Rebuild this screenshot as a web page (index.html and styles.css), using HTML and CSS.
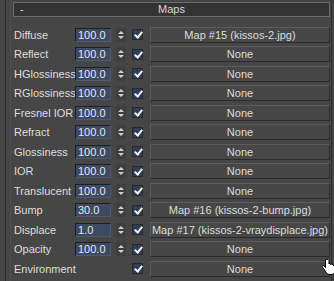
FILE: index.html
```html
<!doctype html>
<html lang="en">
  <head>
    <meta charset="UTF-8" />
    <title>Maps</title>
    <link rel="stylesheet" href="styles.css">
  </head>
  <body>
    <div class="frame">
      <div class="panel">
        <div class="rollout-head">
          <span class="toggle">-</span>
          <span class="rollout-title">Maps</span>
        </div>

        <div class="map-list">
          <div class="map-row">
            <span class="map-label">Diffuse</span>
            <span class="amount">100.0</span>
            <span class="spinner"><i class="up"></i><i class="down"></i></span>
            <span class="check"></span>
            <button class="map-btn">Map #15 (kissos-2.jpg)</button>
          </div>
          <div class="map-row">
            <span class="map-label">Reflect</span>
            <span class="amount">100.0</span>
            <span class="spinner"><i class="up"></i><i class="down"></i></span>
            <span class="check"></span>
            <button class="map-btn">None</button>
          </div>
          <div class="map-row">
            <span class="map-label">HGlossiness</span>
            <span class="amount">100.0</span>
            <span class="spinner"><i class="up"></i><i class="down"></i></span>
            <span class="check"></span>
            <button class="map-btn">None</button>
          </div>
          <div class="map-row">
            <span class="map-label">RGlossiness</span>
            <span class="amount">100.0</span>
            <span class="spinner"><i class="up"></i><i class="down"></i></span>
            <span class="check"></span>
            <button class="map-btn">None</button>
          </div>
          <div class="map-row">
            <span class="map-label">Fresnel IOR</span>
            <span class="amount">100.0</span>
            <span class="spinner"><i class="up"></i><i class="down"></i></span>
            <span class="check"></span>
            <button class="map-btn">None</button>
          </div>
          <div class="map-row">
            <span class="map-label">Refract</span>
            <span class="amount">100.0</span>
            <span class="spinner"><i class="up"></i><i class="down"></i></span>
            <span class="check"></span>
            <button class="map-btn">None</button>
          </div>
          <div class="map-row">
            <span class="map-label">Glossiness</span>
            <span class="amount">100.0</span>
            <span class="spinner"><i class="up"></i><i class="down"></i></span>
            <span class="check"></span>
            <button class="map-btn">None</button>
          </div>
          <div class="map-row">
            <span class="map-label">IOR</span>
            <span class="amount">100.0</span>
            <span class="spinner"><i class="up"></i><i class="down"></i></span>
            <span class="check"></span>
            <button class="map-btn">None</button>
          </div>
          <div class="map-row">
            <span class="map-label">Translucent</span>
            <span class="amount">100.0</span>
            <span class="spinner"><i class="up"></i><i class="down"></i></span>
            <span class="check"></span>
            <button class="map-btn">None</button>
          </div>
          <div class="map-row">
            <span class="map-label">Bump</span>
            <span class="amount">30.0</span>
            <span class="spinner"><i class="up"></i><i class="down"></i></span>
            <span class="check"></span>
            <button class="map-btn">Map #16 (kissos-2-bump.jpg)</button>
          </div>
          <div class="map-row">
            <span class="map-label">Displace</span>
            <span class="amount">1.0</span>
            <span class="spinner"><i class="up"></i><i class="down"></i></span>
            <span class="check"></span>
            <button class="map-btn">Map #17 (kissos-2-vraydisplace.jpg)</button>
          </div>
          <div class="map-row">
            <span class="map-label">Opacity</span>
            <span class="amount">100.0</span>
            <span class="spinner"><i class="up"></i><i class="down"></i></span>
            <span class="check"></span>
            <button class="map-btn">None</button>
          </div>
          <div class="map-row">
            <span class="map-label wide">Environment</span>
            <span class="check"></span>
            <button class="map-btn">None</button>
          </div>
        </div>
      </div>
    </div>

    <svg class="cursor" width="14" height="18" viewBox="0 0 14 18">
      <path d="M4.5 1.5 v8 l-1.5 -1.5 c-1 -1 -2.5 0 -1.5 1.2 l3.5 5 c1 1.3 2 2.3 4 2.3 h1.5 c2 0 3.5 -1.5 3.5 -3.5 v-5 c0 -1 -1.5 -1 -1.5 0 v-1 c0 -1 -1.5 -1 -1.5 0 v-0.5 c0 -1 -1.5 -1 -1.5 0 v-0.5 c0 -1 -1.5 -1 -1.5 0 v-4.5 c0 -1.2 -1.5 -1.2 -1.5 0 z"
        fill="#fff" stroke="#000" stroke-width="1" />
    </svg>
  </body>
</html>
```

FILE: styles.css
```css
body {
  margin: 0;
  background: #454545;
  font-family: "Liberation Sans", Arial, sans-serif;
  font-size: 11px;
  color: #dcdcdc;
  height: 281px;
  overflow: hidden;
}
.frame {
  margin-left: 5px;
  height: 281px;
  border-left: 1px solid #2c2c2c;
}
.panel {
  margin-left: 4px;
  height: 281px;
  border-left: 1px solid #505050;
  border-right: 1px solid #2c2c2c;
  width: 322px;
  padding: 2px 0 0 2px;
  box-sizing: border-box;
  background: #464646;
}
.rollout-head {
  position: relative;
  height: 15px;
  width: 317px;
  box-sizing: border-box;
  border: 1px solid #6a6a6a;
  background: #333333;
  line-height: 13px;
  text-align: center;
  color: #d8d8d8;
}
.toggle {
  position: absolute;
  left: 6px;
  top: 0;
}
.map-list {
  display: grid;
  grid-auto-rows: 19.5px;
  margin-top: 8px;
}
.map-row {
  display: flex;
  align-items: center;
}
.map-label {
  width: 62px;
  padding-left: 1px;
  box-sizing: border-box;
  white-space: nowrap;
  color: #dedede;
}
.map-label.wide {
  width: 113px;
}
.amount {
  width: 36px;
  height: 14px;
  box-sizing: border-box;
  background: #3c4b63;
  border-top: 1px solid #1e1e1e;
  border-left: 1px solid #1e1e1e;
  border-right: 1px solid #505a6a;
  border-bottom: 1px solid #505a6a;
  color: #e4e8ee;
  line-height: 12px;
  padding-left: 2px;
}
.spinner {
  width: 10px;
  height: 14px;
  margin-left: 5px;
  display: flex;
  flex-direction: column;
  align-items: center;
  justify-content: center;
  gap: 2px;
  background: #3e3e3e;
}
.spinner i {
  width: 0;
  height: 0;
  border-left: 3px solid transparent;
  border-right: 3px solid transparent;
}
.spinner .up {
  border-bottom: 3px solid #cfcfcf;
}
.spinner .down {
  border-top: 3px solid #cfcfcf;
}
.check {
  width: 11px;
  height: 11px;
  margin-left: 6px;
  box-sizing: border-box;
  background: #2f3d55;
  border: 1px solid #24282f;
  position: relative;
}
.check::after {
  content: "";
  position: absolute;
  left: 3px;
  top: 0px;
  width: 3px;
  height: 6px;
  border-right: 2px solid #f0f4f8;
  border-bottom: 2px solid #f0f4f8;
  transform: rotate(40deg);
}
.map-btn {
  margin-left: 7px;
  width: 180px;
  height: 16px;
  padding: 0;
  font-family: inherit;
  font-size: 11px;
  color: #dcdcdc;
  background: #474747;
  border: none;
  border-top: 1px solid #5c5c5c;
  border-left: 1px solid #5c5c5c;
  border-bottom: 1px solid #2a2a2a;
  border-right: 1px solid #2a2a2a;
  white-space: nowrap;
  overflow: hidden;
  line-height: 14px;
}
.cursor {
  position: absolute;
  left: 321px;
  top: 258px;
}
```
